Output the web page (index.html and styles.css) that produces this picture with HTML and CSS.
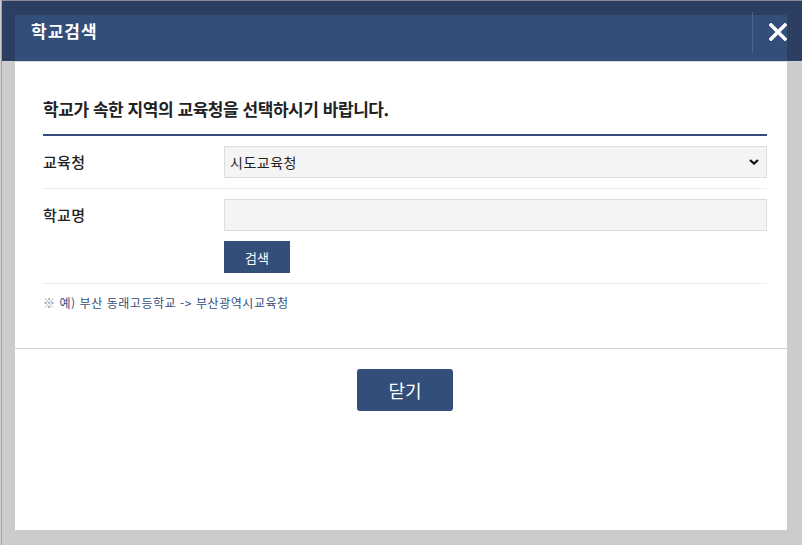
FILE: index.html
```html
<!DOCTYPE html>
<html lang="ko">
<head>
<meta charset="utf-8">
<title>학교검색</title>
<link rel="stylesheet" href="styles.css">
</head>
<body>
<div class="page">
  <div class="page-header"></div>
  <div class="page-main"></div>
</div>

<div class="modal">
  <div class="modal-header">
    <h1 class="modal-title">학교검색</h1>
    <span class="header-divider"></span>
    <button class="close-x" type="button" aria-label="닫기">
      <svg width="18" height="18" viewBox="0 0 18 18"><path d="M2 2 L16 16 M16 2 L2 16" stroke="#fff" stroke-width="3.6" stroke-linecap="square" fill="none"/></svg>
    </button>
  </div>
  <div class="modal-body">
    <h2 class="guide">학교가 속한 지역의 교육청을 선택하시기 바랍니다.</h2>
    <div class="form-row">
      <div class="label">교육청</div>
      <div class="field">
        <div class="select-wrap">
          <select class="select"><option>시도교육청</option></select>
          <svg class="chev" width="10" height="6" viewBox="0 0 10 6"><path d="M1 1 L5 4.6 L9 1" stroke="#111" stroke-width="2.2" fill="none"/></svg>
        </div>
      </div>
    </div>
    <div class="form-row">
      <div class="label">학교명</div>
      <div class="field">
        <input class="input" type="text">
        <button class="btn-search" type="button">검색</button>
      </div>
    </div>
    <p class="note"><span class="mark">※</span> 예) 부산 동래고등학교 -&gt; 부산광역시교육청</p>
  </div>
  <div class="modal-footer">
    <button class="btn-close" type="button">닫기</button>
  </div>
</div>
</body>
</html>
```

FILE: styles.css
```css
* { box-sizing: border-box; }
html, body { margin: 0; padding: 0; }
body {
  width: 802px;
  height: 545px;
  overflow: hidden;
  background: #cccccc;
  font-family: "Noto Sans CJK KR", "Noto Sans", sans-serif;
  position: relative;
}
.page {
  height: 545px;
  margin-left: 1px;
  border-left: 1px solid #a4a4a4;
  border-top: 1px solid #8e8a96;
}
.page-header {
  height: 61px;
  background: #2c3f63;
  border-bottom: 1px solid #d4d4d4;
}
.page-main {
  height: 287px;
  border-bottom: 1px solid #cfcfcf;
}

.modal {
  position: absolute;
  left: 15px;
  top: 15px;
  width: 772px;
  height: 515px;
  background: #ffffff;
}
.modal-header {
  position: relative;
  height: 47px;
  background: #344e7a;
  border-bottom: 1px solid #d4d4d4;
  display: flex;
  align-items: flex-start;
  padding: 4px 0 0 16px;
}
.modal-title {
  margin: 0;
  color: #ffffff;
  font-size: 17px;
  font-weight: bold;
  letter-spacing: 1px;
  line-height: 24px;
}
.header-divider {
  position: absolute;
  left: 737px;
  top: -3px;
  width: 1px;
  height: 40px;
  background: #4d6591;
}
.close-x {
  position: absolute;
  left: 754px;
  top: 8px;
  width: 18px;
  height: 18px;
  padding: 0;
  border: 0;
  background: transparent;
  display: block;
}
.close-x svg { display: block; }

.modal-body {
  height: 287px;
  padding: 35px 20px 0 28px;
  border-bottom: 1px solid #cfcfcf;
}
.guide {
  margin: 0;
  font-size: 17px;
  line-height: 24px;
  font-weight: bold;
  color: #222222;
  letter-spacing: -0.45px;
  padding-bottom: 13px;
  border-bottom: 2px solid #344e7a;
}
.form-row {
  display: flex;
  padding: 10px 0;
  border-bottom: 1px solid #eeeeee;
}
.label {
  width: 181px;
  flex: none;
  font-size: 15px;
  letter-spacing: 0.3px;
  line-height: 32px;
  color: #222222;
  font-weight: 500;
}
.field {
  flex: 1;
  display: flex;
  flex-direction: column;
  align-items: flex-start;
  gap: 10px;
}
.select-wrap {
  position: relative;
  width: 100%;
}
.select {
  appearance: none;
  -webkit-appearance: none;
  width: 100%;
  height: 32px;
  margin: 0;
  padding: 0 0 0 5px;
  border: 1px solid #dcdcdc;
  background: #f4f4f4;
  font-family: inherit;
  font-size: 14px;
  letter-spacing: 0.5px;
  color: #222222;
  border-radius: 0;
  outline: none;
}
.chev {
  position: absolute;
  right: 8px;
  top: 13px;
}
.input {
  width: 100%;
  height: 32px;
  margin: 0;
  border: 1px solid #dcdcdc;
  background: #f4f4f4;
  border-radius: 0;
}
.btn-search {
  width: 66px;
  height: 32px;
  border: 0;
  padding: 0;
  background: #344e7a;
  color: #ffffff;
  font-family: inherit;
  font-size: 13px;
}
.note {
  margin: 0;
  padding-top: 10px;
  font-size: 12px;
  letter-spacing: 0.55px;
  line-height: 18px;
  color: #344e7a;
}
.mark { color: #7c8aa5; }

.modal-footer {
  display: flex;
  justify-content: center;
  padding: 20px 20px 0 28px;
}
.btn-close {
  width: 96px;
  height: 42px;
  border: 0;
  border-radius: 3px;
  background: #344e7a;
  color: #ffffff;
  font-family: inherit;
  font-size: 18px;
}
```
